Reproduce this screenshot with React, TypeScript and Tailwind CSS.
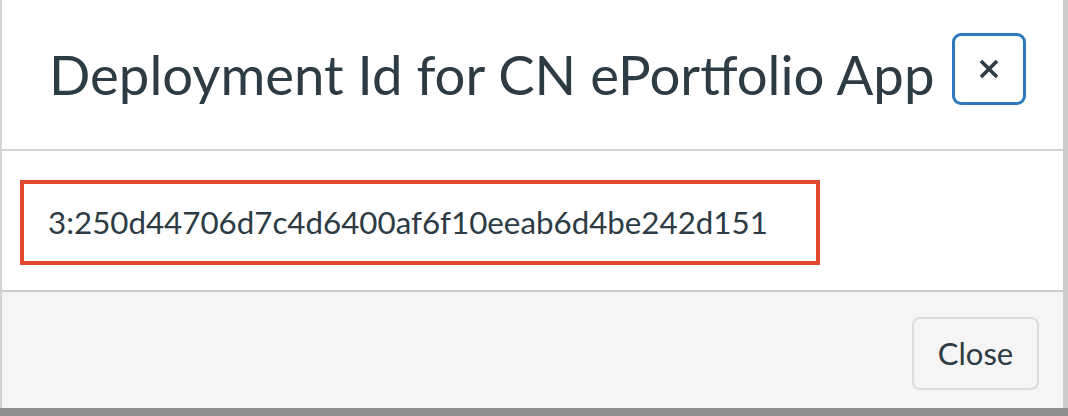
import React from "react";

export default function App() {
  return (
    <div className="w-[1068px] h-[416px] flex flex-col bg-[#8d8d8d] overflow-hidden" style={{ fontFamily: "Lato, 'Noto Sans', sans-serif" }}>
      <div className="flex h-[408px]">
        <div className="flex-1 flex flex-col bg-white border-l-2 border-[#d4d4d4]">
          <div className="h-[151px] flex items-center border-b-2 border-[#d0d4d7] pl-[47px] pr-[37px]">
            <h1 className="flex-1 text-[54.5px] leading-none text-[#2d3b45] font-normal whitespace-nowrap">
              Deployment Id for CN ePortfolio App
            </h1>
            <button className="w-[74px] h-[72px] rounded-[9px] border-[3px] border-[#2b7abc] flex items-center justify-center bg-white -mt-[12px]">
              <svg width="22" height="22" viewBox="0 0 22 22">
                <path d="M3 3 L19 19 M19 3 L3 19" stroke="#2d3b45" strokeWidth="3.6" strokeLinecap="butt" />
              </svg>
            </button>
          </div>
          <div className="h-[141px] border-b-2 border-[#c7cdd1] pt-[29px] pl-[18px]">
            <div className="w-[800px] h-[85px] border-[4px] border-[#e4472f] flex items-center pl-[24px]">
              <span className="text-[31.3px] text-[#2d3b45] leading-none">3:250d44706d7c4d6400af6f10eeab6d4be242d151</span>
            </div>
          </div>
          <div className="flex-1 bg-[#f5f5f5] flex justify-end items-start pt-[25px] pr-[24px]">
            <button className="w-[127px] h-[73px] rounded-[8px] border-2 border-[#dcdcdc] bg-[#f5f5f5] text-[31px] text-[#2d3b45] leading-none">
              Close
            </button>
          </div>
        </div>
        <div className="w-[5px] bg-[#cbcbcb]" />
      </div>
      <div className="flex-1 bg-[#8d8d8d]" />
    </div>
  );
}
